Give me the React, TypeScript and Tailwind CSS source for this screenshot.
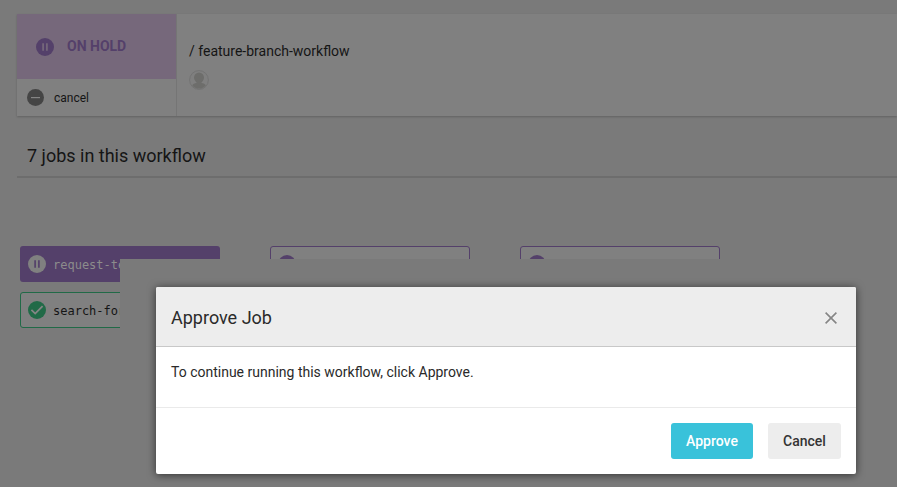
import React from "react";

function PauseIcon({ disc, bars }: { disc: string; bars: string }) {
  return (
    <svg width="18" height="18" viewBox="0 0 18 18" className="block shrink-0">
      <circle cx="9" cy="9" r="9" fill={disc} />
      <path d="M7.1 5.3v7.4M10.9 5.3v7.4" stroke={bars} strokeWidth="1.7" />
    </svg>
  );
}

function CancelIcon() {
  return (
    <svg width="17" height="17" viewBox="0 0 17 17" className="block shrink-0">
      <circle cx="8.5" cy="8.5" r="8.5" fill="#454545" />
      <path d="M4 8.6h9" stroke="#858585" strokeWidth="1.2" />
    </svg>
  );
}

function CheckIcon() {
  return (
    <svg width="18" height="18" viewBox="0 0 18 18" className="block shrink-0">
      <circle cx="9" cy="9" r="9" fill="#216a47" />
      <path d="M3.4 8.8l3.8 3.8 7.4-7.4" fill="none" stroke="#858585" strokeWidth="1.8" />
    </svg>
  );
}

function Avatar() {
  return (
    <svg width="20" height="20" viewBox="0 0 20 20" className="block">
      <circle cx="10" cy="10" r="9.4" fill="#7f7f7f" stroke="#737373" strokeWidth="1" />
      <ellipse cx="10" cy="7.6" rx="5" ry="5.2" fill="#6d6d6b" />
      <path d="M7.500 11h5v2c2 .4 3.500 1.100 4.300 2.200a8.600 8.600 0 0 1-13.600 0c.8-1.100 2.300-1.800 4.300-2.200z" fill="#6d6d6b" />
    </svg>
  );
}

function PendingJob() {
  return (
    <div className="h-9 w-[200px] rounded-[3px] border border-[#54406a] bg-[#808080] pt-2 pl-[7px]">
      <PauseIcon disc="#54406a" bars="#808080" />
    </div>
  );
}

export default function App() {
  return (
    <div className="relative h-[487px] w-[897px] overflow-hidden bg-[#7a7a7a] font-['Roboto',sans-serif] text-[#151515]">
      <section className="mt-3.5 ml-[17px] flex h-[102px] bg-[#808080] shadow-[0_1px_2px_rgba(0,0,0,0.2)]">
        <div className="flex w-40 flex-col border-r border-[#757575]">
          <div className="flex h-[65px] items-center gap-[13px] bg-[#76687b] pl-[19px] text-sm font-bold text-[#54406a]">
            <PauseIcon disc="#54406a" bars="#76687b" />
            <span className="pb-px">ON HOLD</span>
          </div>
          <div className="flex flex-1 items-center gap-2.5 pl-2.5 text-xs">
            <CancelIcon />
            <span>cancel</span>
          </div>
        </div>
        <div className="pt-[27px] pl-3">
          <p className="text-sm leading-5">/ feature-branch-workflow</p>
          <div className="mt-[9px]"><Avatar /></div>
        </div>
      </section>

      <h2 className="mt-[22px] ml-[17px] h-10 border-b-2 border-[#6d6d6d] pl-2.5 text-lg leading-9">
        7 jobs in this workflow
      </h2>

      <section className="mt-[68px] ml-5 flex gap-[50px] font-['DejaVu_Sans_Mono',monospace] text-xs">
        <div className="flex w-[200px] flex-col gap-2.5">
          <div className="flex h-9 items-center gap-[7px] rounded-[3px] bg-[#54406a] pl-2 text-[#8c8c8c]">
            <PauseIcon disc="#808080" bars="#54406a" />
            <span className="pt-0.5">request-testing</span>
          </div>
          <div className="flex h-9 items-center gap-[7px] rounded-[3px] border border-[#216a47] bg-[#808080] pl-[7px]">
            <CheckIcon />
            <span className="pt-0.5">search-for-tests</span>
          </div>
        </div>
        <PendingJob />
        <PendingJob />
      </section>

      <div className="absolute top-[259px] left-[120px] h-[228px] w-[777px] bg-[#7a7a7a]" />

      <div role="dialog" className="absolute top-[287px] left-[156px] flex h-[187px] w-[700px] flex-col overflow-hidden rounded-[2px] bg-white text-[#2a2a2a] shadow-[0_1px_8px_rgba(0,0,0,0.6)]">
        <header className="flex h-[60px] items-center justify-between border-b border-[#c8c8c8] bg-[#ededed] pt-0.5 pr-[19px] pl-[15px]">
          <h3 className="text-lg">Approve Job</h3>
          <svg width="12" height="12" viewBox="0 0 12 12">
            <path d="M.6.6l10.800 10.800M11.400.6L.6 11.400" stroke="#858585" strokeWidth="1.600" />
          </svg>
        </header>
        <div className="h-[61px] border-b border-[#eaeaea] px-[15px] pt-[15px] text-sm leading-5">
          To continue running this workflow, click Approve.
        </div>
        <footer className="flex flex-1 items-center justify-end gap-[15px] pr-[15px] text-sm font-medium">
          <button className="h-9 w-[82px] rounded-[3px] bg-[#39c2da] text-white">Approve</button>
          <button className="h-9 w-[73px] rounded-[3px] bg-[#ededed] text-[#343434]">Cancel</button>
        </footer>
      </div>
    </div>
  );
}
